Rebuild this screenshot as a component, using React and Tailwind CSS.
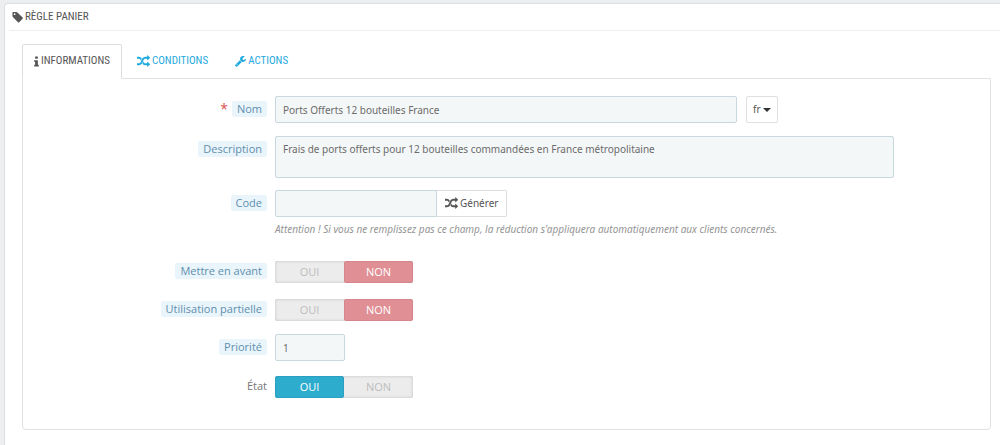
import { useState } from 'react';
import clsx from 'clsx';

const ICONS = {
    tag: 'M576 448q0-53-37.5-90.5t-90.5-37.5-90.5 37.5-37.5 90.5 37.5 90.5 90.5 37.5 90.5-37.5 37.5-90.5zm1067 576q0 53-37 90l-491 492q-39 37-91 37-53 0-90-37l-715-716q-38-37-64.5-101t-26.5-117v-416q0-52 38-90t90-38h416q53 0 117 26.5t102 64.5l715 714q37 39 37 91z',
    info: 'M1216 1344v128q0 26-19 45t-45 19h-512q-26 0-45-19t-19-45v-128q0-26 19-45t45-19h64v-384h-64q-26 0-45-19t-19-45v-128q0-26 19-45t45-19h384q26 0 45 19t19 45v576h64q26 0 45 19t19 45zm-128-1152v192q0 26-19 45t-45 19h-256q-26 0-45-19t-19-45v-192q0-26 19-45t45-19h256q26 0 45 19t19 45z',
    random: 'M666 481q-60 92-137 273-22-45-37-72.5t-40.5-63.5-51-56.5-63-35-81.5-14.5h-224q-14 0-23-9t-9-23v-192q0-14 9-23t23-9h224q250 0 410 225zm1126 799q0 14-9 23l-320 320q-9 9-23 9-13 0-22.5-9.5t-9.5-22.5v-192q-32 0-85 .5t-81 1-73-1-71-5-64-10.5-63-18.5-58-28.5-59-40-55-53.5-56-69.5q59-93 136-273 22 45 37 72.5t40.5 63.5 51 56.5 63 35 81.5 14.5h256v-192q0-14 9-23t23-9q12 0 24 10l319 319q9 9 9 23zm0-896q0 14-9 23l-320 320q-9 9-23 9-13 0-22.5-9.5t-9.5-22.5v-192h-256q-48 0-87 15t-69 45-51 61.5-45 77.5q-32 62-78 171-29 66-49.5 111t-54 105-64 100-74 83-90 68.5-106.5 42-128 16.5h-224q-14 0-23-9t-9-23v-192q0-14 9-23t23-9h224q48 0 87-15t69-45 51-61.5 45-77.5q32-62 78-171 29-66 49.5-111t54-105 64-100 74-83 90-68.5 106.5-42 128-16.5h256v-192q0-14 9-23t23-9q12 0 24 10l319 319q9 9 9 23z',
    wrench: 'M448 1472q0-26-19-45t-45-19-45 19-19 45 19 45 45 19 45-19 19-45zm644-420l-682 682q-37 37-90 37-52 0-91-37l-106-108q-38-36-38-90 0-53 38-91l681-681q39 98 114.5 173.5t173.5 114.5zm634-435q0 39-23 106-47 134-164.5 217.5t-258.5 83.5q-185 0-316.5-131.5t-131.5-316.5 131.5-316.5 316.5-131.5q58 0 121.5 16.5t107.5 46.5q16 11 16 28t-16 28l-293 169v224l193 107q5-3 79-48.5t135.5-81 70.5-35.5q15 0 23.5 10t8.5 25z',
};

const VIEW_BOXES = {
    tag: '64 128 1600 1600',
    info: '576 64 640 1536',
    random: '0 0 1792 1792',
    wrench: '64 128 1664 1664',
};

const Icon = ({ name, className }) => (
    <svg viewBox={VIEW_BOXES[name]} fill="currentColor" aria-hidden="true" className={className}>
        <path d={ICONS[name]} />
    </svg>
);

const TABS = [
    { id: 'informations', label: 'INFORMATIONS', icon: 'info', iconClass: 'h-[11px] w-[5px]' },
    { id: 'conditions', label: 'CONDITIONS', icon: 'random', iconClass: 'size-[13px]' },
    { id: 'actions', label: 'ACTIONS', icon: 'wrench', iconClass: 'size-[11px]' },
];

const headingFont = "font-['Ubuntu_Condensed','Roboto_Condensed','Open_Sans_Condensed',Lato,sans-serif]";
const bodyFont = "font-['Noto_Sans',sans-serif]";

const fieldClass = 'block rounded-xs border border-[#c9d8dc] bg-[#f4f7f8] px-[7px] text-[10px] leading-4 text-[#6b6b6b]';

const Row = ({ label, htmlFor, required, plain, className, children }) => (
    <div className={clsx('flex gap-2', className)}>
        <div className="flex w-[244px] shrink-0 items-start justify-end gap-1 pt-[5px] font-['Open_Sans',sans-serif] text-[11px] leading-4">
            {required && <span className="text-[14px] text-[#d9534f]">*</span>}
            <label
                id={`${htmlFor}-label`}
                htmlFor={htmlFor}
                className={plain ? 'text-[#777]' : 'rounded-xs bg-[#eaf5fb] px-[5px] text-[#5e8fae]'}
            >
                {label}
            </label>
        </div>
        <div className="min-w-0 flex-1 pr-24">{children}</div>
    </div>
);

const Switch = ({ id, value, onChange }) => (
    <div
        role="group"
        aria-labelledby={`${id}-label`}
        className="flex h-[22px] w-[138px] rounded-xs bg-[#ececec] font-['Open_Sans',sans-serif] text-[11px] inset-shadow-[0_0_3px_#bbb]"
    >
        <button
            id={id}
            type="button"
            aria-pressed={value}
            onClick={() => onChange(true)}
            className={clsx('flex w-1/2 items-center justify-center rounded-xs border', value ? 'border-[#2a9fbf] bg-[#2eacce] text-white' : 'border-transparent text-[#bdbdbd]')}
        >
            OUI
        </button>
        <button
            type="button"
            aria-pressed={!value}
            onClick={() => onChange(false)}
            className={clsx('flex w-1/2 items-center justify-center rounded-xs border', value ? 'border-transparent text-[#bdbdbd]' : 'border-[#d5858b] bg-[#e08f95] text-white')}
        >
            NON
        </button>
    </div>
);

export default function App() {
    const [activeTab, setActiveTab] = useState('informations');
    const [highlight, setHighlight] = useState(false);
    const [partialUse, setPartialUse] = useState(false);
    const [enabled, setEnabled] = useState(true);

    return (
        <div className={clsx('flex min-h-screen bg-[#eceeef] pt-[3px] pl-1', bodyFont)}>
            <main className="flex-1 rounded-tl border-t border-l border-[#dcdfe1] bg-white">
                <h1 className={clsx('ml-1 flex h-[27px] items-center gap-[2px] border-b border-[#eeeeee] pl-[3px] text-[11px] text-[#555]', headingFont)}>
                    <Icon name="tag" className="size-[11px]" />
                    RÈGLE PANIER
                </h1>

                <div className="pt-[13px] pr-[9px] pb-[14px] pl-[17px]">
                    <div role="tablist" className={clsx('flex gap-[3px] text-[11px]', headingFont)}>
                        {TABS.map(tab => (
                            <button
                                key={tab.id}
                                type="button"
                                role="tab"
                                aria-selected={activeTab === tab.id}
                                onClick={() => setActiveTab(tab.id)}
                                className={clsx(
                                    '-mb-px flex h-[35px] items-center gap-[2px] rounded-t-xs border px-[11px]',
                                    activeTab === tab.id
                                        ? 'border-[#dddddd] border-b-white bg-white text-[#555]'
                                        : 'border-transparent text-[#1fa9dd]'
                                )}
                            >
                                <Icon name={tab.icon} className={tab.iconClass} />
                                {tab.label}
                            </button>
                        ))}
                    </div>

                    <form className="rounded-b border border-[#e2e2e2] pt-[17px] pb-[31px]" onSubmit={e => e.preventDefault()}>
                        <Row label="Nom" htmlFor="name" required>
                            <div className="flex">
                                <input id="name" type="text" defaultValue="Ports Offerts 12 bouteilles France" className={clsx(fieldClass, 'h-[27px] min-w-0 flex-1')} />
                                <div className="w-[157px] pl-[9px]">
                                    <button type="button" className="flex h-[27px] items-center gap-[2px] rounded-xs border border-[#e0e0e0] bg-white px-[6px] text-[10px] text-[#555]">
                                        fr
                                        <span className="border-x-4 border-t-4 border-x-transparent border-t-[#333]" />
                                    </button>
                                </div>
                            </div>
                        </Row>

                        <Row label="Description" htmlFor="description" className="mt-[13px]">
                            <textarea
                                id="description"
                                defaultValue="Frais de ports offerts pour 12 bouteilles commandées en France métropolitaine"
                                className={clsx(fieldClass, 'h-[42px] w-full resize-none py-1')}
                            />
                        </Row>

                        <Row label="Code" htmlFor="code" className="mt-3">
                            <div className="flex">
                                <input id="code" type="text" className={clsx(fieldClass, 'h-[27px] w-[162px] rounded-r-none')} />
                                <button type="button" className="flex h-[27px] items-center gap-[2px] rounded-r-xs border border-l-0 border-[#dddddd] bg-white px-2 text-[10px] text-[#555]">
                                    <Icon name="random" className="size-[13px]" />
                                    Générer
                                </button>
                            </div>
                            <p className="mt-1 text-[10px] leading-4 whitespace-nowrap text-[#959595] italic">
                                Attention ! Si vous ne remplissez pas ce champ, la réduction s'appliquera automatiquement aux clients concernés.
                            </p>
                        </Row>

                        <Row label="Mettre en avant" htmlFor="highlight" className="mt-[21px]">
                            <div className="pt-[3px] pb-px"><Switch id="highlight" value={highlight} onChange={setHighlight} /></div>
                        </Row>

                        <Row label="Utilisation partielle" htmlFor="partial" className="mt-3">
                            <div className="pt-[3px] pb-px"><Switch id="partial" value={partialUse} onChange={setPartialUse} /></div>
                        </Row>

                        <Row label="Priorité" htmlFor="priority" className="mt-3">
                            <input id="priority" type="text" defaultValue="1" className={clsx(fieldClass, 'h-[27px] w-[70px]')} />
                        </Row>

                        <Row label="État" htmlFor="enabled" plain className="mt-3">
                            <div className="pt-[3px]"><Switch id="enabled" value={enabled} onChange={setEnabled} /></div>
                        </Row>
                    </form>
                </div>
            </main>
        </div>
    );
}
